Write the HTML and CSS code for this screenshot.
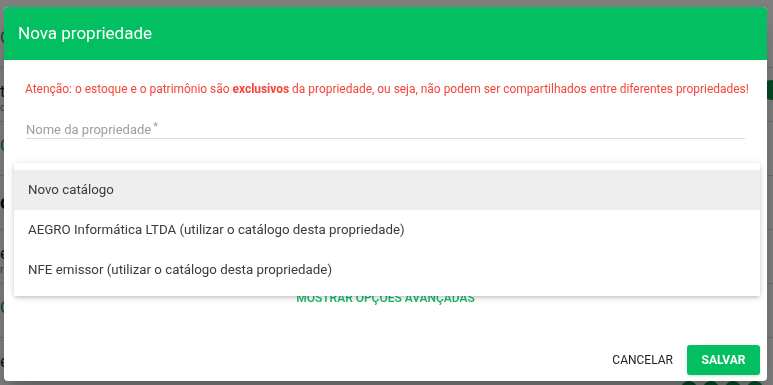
FILE: index.html
```html
<!DOCTYPE html>
<html lang="pt-BR">

<head>
    <meta charset="UTF-8">
    <meta name="viewport" content="width=device-width, initial-scale=1.0">
    <title>Nova propriedade</title>
    <link rel="stylesheet" href="styles.css">
</head>

<body>
    <div class="page">
        <div class="page-row"><span class="page-green">C</span></div>
        <div class="page-row"><span class="page-dark">t</span><span class="page-small">ci</span></div>
        <div class="page-row"><span class="page-green">C</span></div>
        <div class="page-row"><span class="page-bold">o</span></div>
        <div class="page-row"><span class="page-dark">e</span><span class="page-small">r</span></div>
        <div class="page-row"><span class="page-green">C</span></div>
        <div class="page-row"><span class="page-dark">e</span></div>
        <div class="page-dots">
            <span class="dot"></span><span class="dot"></span><span class="dot"></span><span class="dot"></span>
        </div>
        <span class="page-badge"></span>
    </div>

    <div class="overlay">
        <div class="dialog">
            <div class="dialog-head">
                <h2>Nova propriedade</h2>
            </div>
            <div class="dialog-body">
                <p class="warning">Atenção: o estoque e o patrimônio são <b>exclusivos</b> da propriedade, ou seja, não podem ser compartilhados entre diferentes propriedades!</p>
                <div class="field">
                    <label>Nome da propriedade<span class="req">*</span></label>
                </div>
                <div class="select-space"></div>
                <div class="advanced">Mostrar opções avançadas</div>
            </div>
            <div class="dialog-foot">
                <button class="btn btn-flat">Cancelar</button>
                <button class="btn btn-green">Salvar</button>
            </div>

            <ul class="menu">
                <li class="active">Novo catálogo</li>
                <li>AEGRO Informática LTDA (utilizar o catálogo desta propriedade)</li>
                <li>NFE emissor (utilizar o catálogo desta propriedade)</li>
            </ul>
        </div>
    </div>
</body>

</html>
```

FILE: styles.css
```css
* {
    box-sizing: border-box;
}

body {
    margin: 0;
    font-family: Roboto, "Noto Sans", sans-serif;
    background: #fff;
    overflow: hidden;
}

/* page behind the dialog */
.page {
    height: 385px;
    padding-top: 14px;
    position: relative;
}

.page-row {
    height: 54px;
    border-bottom: 1px solid #ddd;
    padding: 14px 0 0 0;
    font-size: 16px;
}

.page-green {
    color: #0a8f4a;
}

.page-dark {
    color: #222;
}

.page-bold {
    color: #111;
    font-weight: 700;
    font-size: 20px;
}

.page-small {
    display: block;
    color: #888;
    font-size: 11px;
}

.page-dots {
    position: absolute;
    right: 10px;
    bottom: -12px;
    display: flex;
    gap: 6px;
}

.dot {
    width: 16px;
    height: 16px;
    border-radius: 50%;
    background: #0a8f4a;
}

.page-badge {
    position: absolute;
    right: -8px;
    top: 80px;
    width: 20px;
    height: 20px;
    border-radius: 50%;
    background: #0a8f4a;
}

/* dialog */
.overlay {
    position: fixed;
    inset: 0;
    background: rgba(0, 0, 0, .5);
    display: flex;
    justify-content: center;
    align-items: center;
}

.dialog {
    position: relative;
    flex: none;
    width: 763px;
    height: 374px;
    margin-left: -2px;
    margin-top: 2px;
    background: #fff;
    border-radius: 4px;
    box-shadow: 0 11px 15px -7px rgba(0, 0, 0, .2), 0 24px 38px 3px rgba(0, 0, 0, .14);
    display: flex;
    flex-direction: column;
    overflow: hidden;
}

.dialog-head {
    height: 53px;
    background: #02bf61;
    display: flex;
    align-items: center;
    padding: 0 14px;
}

.dialog-head h2 {
    margin: 0;
    color: #fff;
    font-size: 17px;
    font-weight: 400;
}

.dialog-body {
    flex: 1;
    padding: 0 21px;
}

.warning {
    margin: 21px 0 0 0;
    color: #f5443a;
    font-size: 11.95px;
    line-height: 16px;
    white-space: nowrap;
}

.warning b {
    font-weight: 700;
}

.field {
    margin: 22px 1px 0 1px;
    height: 20px;
    border-bottom: 1px solid #dcdcdc;
}

.field label {
    color: #9e9e9e;
    font-size: 13px;
    line-height: 16px;
}

.req {
    margin-left: 2px;
    font-size: 11px;
    vertical-align: top;
}

.select-space {
    height: 152px;
}

.advanced {
    text-align: center;
    text-transform: uppercase;
    color: #11bb63;
    font-size: 12px;
    font-weight: 500;
}

.dialog-foot {
    display: flex;
    justify-content: flex-end;
    align-items: center;
    gap: 2px;
    padding: 0 7px 6px 0;
}

.btn {
    font-family: inherit;
    text-transform: uppercase;
    font-size: 12px;
    height: 30px;
    border: none;
    border-radius: 3px;
    padding: 0 12px;
    background: none;
}

.btn-flat {
    color: #222;
    font-weight: 400;
}

.btn-green {
    width: 73px;
    background: #02bf61;
    color: #fff;
    font-weight: 700;
    box-shadow: 0 1px 3px rgba(0, 0, 0, .15);
}

/* open select menu */
.menu {
    position: absolute;
    left: 10px;
    top: 156px;
    width: 746px;
    margin: 0;
    padding: 7px 0 6px 0;
    list-style: none;
    background: #fff;
    box-shadow: 0 2px 4px -1px rgba(0, 0, 0, .2), 0 1px 8px rgba(0, 0, 0, .12);
}

.menu li {
    height: 40px;
    line-height: 40px;
    padding: 0 14px;
    font-size: 13.3px;
    color: #3a3a3a;
}

.menu li.active {
    background: #eeeeee;
}
```
